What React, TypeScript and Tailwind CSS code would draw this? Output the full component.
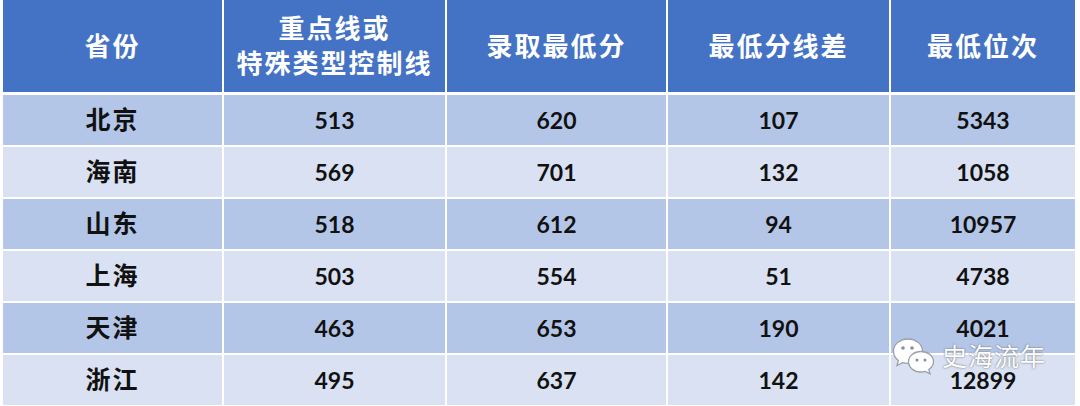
import React from "react";

const rows = [
  ["北京", "513", "620", "107", "5343"],
  ["海南", "569", "701", "132", "1058"],
  ["山东", "518", "612", "94", "10957"],
  ["上海", "503", "554", "51", "4738"],
  ["天津", "463", "653", "190", "4021"],
  ["浙江", "495", "637", "142", "12899"],
];

const font = {
  fontFamily: '"Lato", "Noto Sans CJK SC", sans-serif',
};

function WeChatMark() {
  return (
    <svg width="44" height="38" viewBox="0 0 44 38">
      {/* big bubble */}
      <path
        d="M16 2 C7.5 2 1.5 7.6 1.5 14.2 C1.5 18 3.4 21.2 6.4 23.4 L5 28.5 L10.6 25.6 C12.3 26.1 14.1 26.4 16 26.4 C24.5 26.4 30.5 20.8 30.5 14.2 C30.5 7.6 24.5 2 16 2 Z"
        fill="#ffffff"
        stroke="#9aa0a8"
        strokeWidth="1.3"
      />
      <circle cx="11" cy="11" r="1.8" fill="#8a9099" />
      <circle cx="20" cy="11" r="1.8" fill="#8a9099" />
      {/* small bubble */}
      <path
        d="M29 14.5 C21.8 14.5 16.5 19.3 16.5 24.8 C16.5 30.3 21.8 35 29 35 C30.5 35 31.9 34.8 33.2 34.4 L38 36.8 L36.8 32.5 C39.6 30.6 41.5 27.9 41.5 24.8 C41.5 19.3 36.2 14.5 29 14.5 Z"
        fill="#ffffff"
        stroke="#9aa0a8"
        strokeWidth="1.3"
      />
      <circle cx="25" cy="23" r="1.6" fill="#8a9099" />
      <circle cx="33" cy="23" r="1.6" fill="#8a9099" />
    </svg>
  );
}

export default function App() {
  return (
    <div className="relative w-[1080px] h-[406px] bg-white overflow-hidden" style={font}>
      <div className="pl-[3px] pr-[5px]">
        <div className="grid grid-cols-[219px_221px_219px_221px_184px] gap-x-[2px]">
          {/* header */}
          {["省份", "重点线或\n特殊类型控制线", "录取最低分", "最低分线差", "最低位次"].map((h) => (
            <div
              key={h}
              className="h-[92px] bg-[#4472c4] text-white font-semibold text-[26px] tracking-[2px] leading-[35px] flex items-center justify-center text-center whitespace-pre-line"
            >
              {h}
            </div>
          ))}
        </div>
        <div className="mt-[3px] flex flex-col gap-y-[2px]">
          {rows.map((r, i) => (
            <div
              key={r[0]}
              className="grid grid-cols-[219px_221px_219px_221px_184px] gap-x-[2px]"
            >
              {r.map((c, j) => (
                <div
                  key={j}
                  className={`h-[50px] flex items-center justify-center text-[#111] ${
                    j === 0 ? "text-[25px] font-bold tracking-[2px]" : "text-[23px] font-bold"
                  } ${i % 2 === 0 ? "bg-[#b4c6e7]" : "bg-[#d9e1f2]"}`}
                >
                  {c}
                </div>
              ))}
            </div>
          ))}
        </div>
      </div>

      {/* watermark */}
      <div className="absolute left-[892px] top-[337px] flex items-center gap-[6px]">
        <WeChatMark />
        <span
          className="text-white text-[25px] font-normal tracking-[1px] [text-shadow:0_0_2px_rgba(60,60,60,0.8)]"
          style={{ fontFamily: '"Noto Sans CJK SC", sans-serif' }}
        >
          史海流年
        </span>
      </div>
    </div>
  );
}
